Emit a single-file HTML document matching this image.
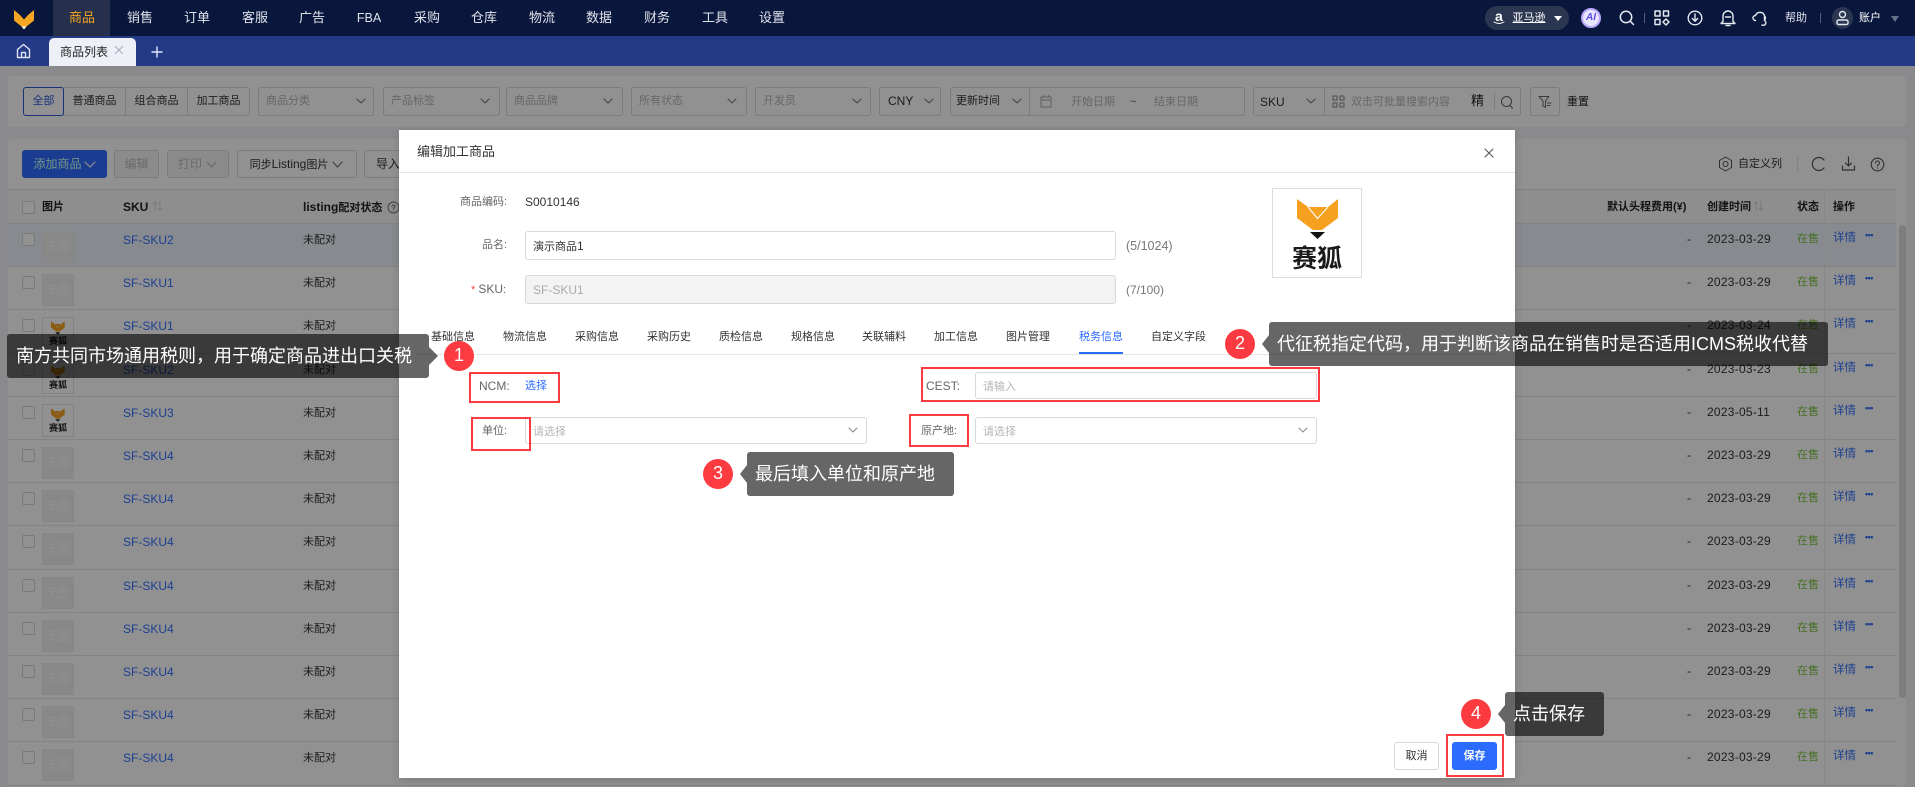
<!DOCTYPE html>
<html lang="zh"><head><meta charset="utf-8"><title>编辑加工商品</title>
<style>
*{box-sizing:border-box;margin:0;padding:0}
html,body{width:1915px;height:787px;overflow:hidden}
body{position:relative;background:#f2f3f8;font:11px/14px "Liberation Sans","Noto Sans CJK SC",sans-serif;color:#333}
.a,.a2{position:absolute;white-space:nowrap}
.l{font-size:12px}
#nav{position:absolute;left:0;top:0;width:1915px;height:36px;background:#0a173d}
#nav span{position:absolute;top:10px;font-size:13px;line-height:16px;color:#dfe3ea;transform:translateX(-50%);white-space:nowrap}
#act{position:absolute;left:53px;top:0;width:57px;height:36px;background:#262f4c}
#tabs{position:absolute;left:0;top:36px;width:1915px;height:30px;background:#253a87}
#tab{position:absolute;left:49px;top:2px;width:87px;height:28px;background:#eef0f8;border-radius:5px 5px 0 0}
.box{position:absolute;background:#fff;border:1px solid #d9d9d9;border-radius:3px}
.ph2{color:#b5b5b5}
.panel{position:absolute;background:#fff;border-radius:4px}
.btn{position:absolute;top:150px;height:28px;border:1px solid #d9d9d9;border-radius:3px;background:#fff;line-height:26px;text-align:center;font-size:12px;white-space:nowrap}
.r{position:absolute;left:8px;width:1888px;height:43.2px;border-bottom:1px solid #e6e6e6;background:#fff}
.r.sel{background:#edf3fc}
.r>*{position:absolute;white-space:nowrap}
.cb{left:14px;top:9px;width:13px;height:13px;border:1px solid #d5d5d5;border-radius:2px;background:#fff}
.ph{left:34px;top:7px;width:32px;height:32px;border:1px solid #eee;background:#efefef;color:#fbfbfb;text-align:center;line-height:30px;font-weight:400;font-size:12px}
.lg{left:34px;top:7px;width:32px;height:33px;border:1px solid #e4e4e4;background:#fff;overflow:hidden}
.lg svg{position:absolute;left:8px;top:3px;width:14px;height:14px}
.lg em{position:absolute;left:0;width:30px;top:18px;text-align:center;font:700 9px/11px "Liberation Sans","Noto Sans CJK SC",sans-serif;color:#222}
.sku{left:115px;top:9px;color:#3370ff;font-size:12px}
.st{left:295px;top:9px}
.da{left:1679px;top:8px;font-size:12px}
.dt{left:1699px;top:8px;font-size:12px;letter-spacing:.25px}
.on{left:1789px;top:8px;color:#79c53f}
.dl{left:1825px;top:7px;color:#3370ff;font-size:11.5px}
.mo{left:1857px;top:4px;color:#3370ff;font-weight:700;font-size:9px;letter-spacing:-.5px}
#ov{position:absolute;left:0;top:66px;width:1915px;height:721px;background:rgba(0,0,0,.43)}
#modal{position:absolute;left:399px;top:130px;width:1116px;height:648px;background:#fff;box-shadow:0 2px 8px rgba(0,0,0,.15)}
.lab{color:#666;position:absolute;white-space:nowrap;text-align:right}
.inp{position:absolute;border:1px solid #d9d9d9;border-radius:3px;background:#fff}
.tb{position:absolute;white-space:nowrap;color:#333}
.red{position:absolute;border:2.5px solid #fb3b3f}
.tip{position:absolute;height:44px;background:rgba(0,0,0,.6);border-radius:3px;color:#fff;font-size:18px;line-height:44px;white-space:nowrap}
.ar{position:absolute;width:0;height:0;border-top:9px solid transparent;border-bottom:9px solid transparent}
.num{position:absolute;width:30px;height:30px;border-radius:50%;background:#fb3b3f;color:#fff;font-size:18px;line-height:29px;text-align:center}
svg.i{position:absolute;fill:none;stroke-linecap:round;stroke-linejoin:round}
</style></head><body>
<svg width="0" height="0" style="position:absolute"><defs><symbol id="fox" viewBox="0 0 42 40"><path d="M0 0L11 8H31L41 0V19L25 31H16L0 19Z" fill="#f5a11f"/><path d="M11 8L20.5 19.5 31 8" fill="none" stroke="#fff" stroke-width="1.1"/><path d="M13 33H28L20.5 40Z" fill="#111"/></symbol></defs></svg>

<div id="nav"><div id="act"></div>
<svg style="position:absolute;left:13px;top:9px" width="22" height="21" viewBox="0 0 22 21"><path d="M1 1L7 6H15L21 1V11.5L13.5 17.5H8.5L1 11.5Z" fill="#f5a623"/><path d="M7 6L11 10.5 15 6Z" fill="#0a173d"/><path d="M8.5 17.5H13.5L11 20.5Z" fill="#fff"/></svg>
<span style="left:82px;color:#f5a623">商品</span><span style="left:140px">销售</span><span style="left:197px">订单</span><span style="left:255px">客服</span><span style="left:312px">广告</span><span style="left:369px;font-size:12.5px">FBA</span><span style="left:427px">采购</span><span style="left:484px">仓库</span><span style="left:542px">物流</span><span style="left:599px">数据</span><span style="left:657px">财务</span><span style="left:715px">工具</span><span style="left:772px">设置</span>
<div class="a" style="left:1485px;top:6px;width:84px;height:24px;border-radius:12px;background:#2b3650"></div>
<div class="a" style="left:1495px;top:8px;color:#fff;font:700 14px/16px 'Liberation Sans',sans-serif">a</div>
<svg class="i" style="left:1493px;top:21px" width="12" height="5" stroke="#fff" stroke-width="1"><path d="M1 1Q6 4 11 1"/></svg>
<span style="left:1529px;font-size:11px;color:#fff;text-decoration:underline">亚马逊</span>
<div class="a" style="left:1554px;top:16px;border-left:4px solid transparent;border-right:4px solid transparent;border-top:5px solid #fff"></div>
<div class="a" style="left:1581px;top:8px;width:20px;height:20px;border-radius:50%;background:#e9e6ff;border:2px solid #b9a7ff;color:#5a4be8;font:italic 700 10px/16px 'Liberation Sans',sans-serif;text-align:center">AI</div>
<svg class="i" style="left:1618px;top:9px" width="18" height="18" stroke="#e4e8ef" stroke-width="1.5"><circle cx="8" cy="8" r="5.7"/><path d="M12.2 12.2L15.5 15.5"/></svg>
<div class="a" style="left:1644px;top:13px;width:1px;height:10px;background:#56607a"></div>
<svg class="i" style="left:1654px;top:10px" width="16" height="16" stroke="#e4e8ef" stroke-width="1.5"><rect x="1" y="1" width="5" height="5"/><rect x="9.5" y="1" width="5" height="5"/><rect x="1" y="9.5" width="5" height="5"/><path d="M12 9L15 12 12 15 9 12Z"/></svg>
<svg class="i" style="left:1687px;top:10px" width="16" height="16" stroke="#e4e8ef" stroke-width="1.4"><circle cx="8" cy="8" r="6.8"/><path d="M8 4V11M5.3 8.5L8 11.2 10.7 8.5"/></svg>
<svg class="i" style="left:1720px;top:9px" width="16" height="18" stroke="#e4e8ef" stroke-width="1.4"><path d="M3 12.5V7A5 5 0 0 1 13 7V12.5L15 14.5H1ZM6 16.5H10M5.5 8H10.5"/></svg>
<svg class="i" style="left:1752px;top:9px" width="16" height="18" stroke="#e4e8ef" stroke-width="1.4"><path d="M3.5 11.5A2.5 2.5 0 0 1 3.5 6.5M3.5 6.5A4.8 4.8 0 0 1 12.5 6.5V11.5A2 2 0 0 1 10 16"/><path d="M12.5 7A2.5 2.5 0 0 1 12.5 11"/></svg>
<span style="left:1796px;font-size:11px">帮助</span>
<div class="a" style="left:1820px;top:13px;width:1px;height:10px;background:#56607a"></div>
<div class="a" style="left:1832px;top:7px;width:21px;height:22px;border-radius:50%;background:#2b3650"></div>
<svg class="i" style="left:1835px;top:10px" width="15" height="16" stroke="#e4e8ef" stroke-width="1.4"><circle cx="7.5" cy="4.5" r="3"/><rect x="2" y="10" width="11" height="4.5" rx="1.5"/></svg>
<span style="left:1870px;font-size:11px;color:#fff">账户</span>
<div class="a" style="left:1891px;top:16px;border-left:4.5px solid transparent;border-right:4.5px solid transparent;border-top:6px solid #667089"></div>
</div>

<div id="tabs">
<svg class="i" style="left:16px;top:7px" width="15" height="16" stroke="#dfe5f5" stroke-width="1.4"><path d="M1.5 14.5V6.5L7.5 1.5 13.5 6.5V14.5ZM5.5 14.5V9.5H9.5V14.5"/></svg>
<div id="tab"><div class="a" style="left:11px;top:7px;font-size:12px;color:#222">商品列表</div>
<svg class="i" style="left:65px;top:7px" width="10" height="10" stroke="#aab" stroke-width="1.1"><path d="M1.5 1.5L8.5 8.5M8.5 1.5L1.5 8.5"/></svg></div>
<svg class="i" style="left:151px;top:10px" width="12" height="12" stroke="#dfe5f5" stroke-width="1.4"><path d="M6 1V11M1 6H11"/></svg>
</div>

<div class="panel" style="left:8px;top:76px;width:1898px;height:51px"></div>
<div class="box" style="left:63px;top:87px;width:63px;height:29px;text-align:center;line-height:27px;border-radius:0">普通商品</div>
<div class="box" style="left:125px;top:87px;width:63px;height:29px;text-align:center;line-height:27px;border-radius:0">组合商品</div>
<div class="box" style="left:187px;top:87px;width:63px;height:29px;text-align:center;line-height:27px">加工商品</div>
<div class="box" style="left:23px;top:87px;width:41px;height:29px;border-color:#2a5bd7;color:#2a5bd7;text-align:center;line-height:27px;font-size:11px">全部</div>
<div class="box ph2" style="left:258px;top:87px;width:116px;height:29px;padding-left:7px;line-height:27px">商品分类</div>
<div class="box ph2" style="left:383px;top:87px;width:117px;height:29px;padding-left:7px;line-height:27px">产品标签</div>
<div class="box ph2" style="left:506px;top:87px;width:117px;height:29px;padding-left:7px;line-height:27px">商品品牌</div>
<div class="box ph2" style="left:631px;top:87px;width:116px;height:29px;padding-left:7px;line-height:27px">所有状态</div>
<div class="box ph2" style="left:755px;top:87px;width:116px;height:29px;padding-left:7px;line-height:27px">开发员</div>
<div class="box" style="left:879px;top:87px;width:62px;height:29px;padding-left:8px;line-height:27px;font-size:12px">CNY</div>
<svg class="i" style="left:356px;top:98px" width="580" height="8" stroke="#777" stroke-width="1"><path d="M1 1L5 5 9 1M125 1L129 5 133 1M248 1L252 5 256 1M372 1L376 5 380 1M497 1L501 5 505 1M569 1L573 5 577 1"/></svg>
<div class="box" style="left:950px;top:87px;width:295px;height:29px"></div>
<div class="a" style="left:956px;top:94px">更新时间</div>
<div class="a" style="left:1029px;top:88px;width:1px;height:27px;background:#d9d9d9"></div>
<svg class="i" style="left:1012px;top:98px" width="10" height="8" stroke="#777"><path d="M1 1L5 5 9 1"/></svg>
<svg class="i" style="left:1040px;top:95px" width="12" height="13" stroke="#aaa"><rect x="1" y="2" width="10" height="10"/><path d="M1 5H11M3.5 .5V2M8.5 .5V2"/></svg>
<div class="a ph2" style="left:1071px;top:95px">开始日期</div><div class="a" style="left:1130px;top:95px;color:#666">~</div><div class="a ph2" style="left:1154px;top:95px">结束日期</div>
<div class="box" style="left:1253px;top:87px;width:268px;height:29px"></div>
<div class="a l" style="left:1260px;top:95px">SKU</div>
<svg class="i" style="left:1306px;top:98px" width="10" height="8" stroke="#777"><path d="M1 1L5 5 9 1"/></svg>
<div class="a" style="left:1324px;top:88px;width:1px;height:27px;background:#d9d9d9"></div>
<svg class="i" style="left:1332px;top:95px" width="13" height="13" stroke="#888"><rect x="1" y="1" width="4" height="4"/><rect x="8" y="1" width="4" height="4"/><rect x="1" y="8" width="4" height="4"/><rect x="8" y="8" width="4" height="4"/></svg>
<div class="a ph2" style="left:1351px;top:95px">双击可批量搜索内容</div>
<div class="a" style="left:1471px;top:94px;font-size:13px;color:#222">精</div>
<div class="a" style="left:1494px;top:93px;width:1px;height:17px;background:#d9d9d9"></div>
<svg class="i" style="left:1500px;top:95px" width="14" height="15" stroke="#666"><circle cx="6.5" cy="6.5" r="5"/><path d="M10 10.5L12.5 13.5"/></svg>
<div class="box" style="left:1530px;top:87px;width:30px;height:29px"></div>
<svg class="i" style="left:1538px;top:95px" width="14" height="14" stroke="#666"><path d="M1 1.5H11L7.5 6V12.5L5 11V6ZM9.5 8H13M9.5 10.5H12"/></svg>
<div class="a" style="left:1567px;top:95px;color:#222">重置</div>

<div class="panel" style="left:8px;top:139px;width:1898px;height:648px"></div>
<div class="btn" style="left:22px;width:85px;background:#2f6bff;border-color:#2f6bff;color:#cfe;padding-right:14px">添加商品</div>
<svg class="i" style="left:84px;top:161px" width="12" height="8" stroke="#dde6ff" stroke-width="1.3"><path d="M1 1L6 6 11 1"/></svg>
<div class="btn" style="left:114px;width:45px;background:#f5f5f5;color:#bbb">编辑</div>
<div class="btn" style="left:167px;width:62px;background:#f5f5f5;color:#bbb;padding-right:16px">打印</div>
<svg class="i" style="left:206px;top:161px" width="11" height="8" stroke="#bbb" stroke-width="1.2"><path d="M1 1L5.5 6 10 1"/></svg>
<div class="btn" style="left:237px;width:120px;padding-right:16px;font-size:11px">同步<span class="l">Listing</span>图片</div>
<svg class="i" style="left:332px;top:161px" width="11" height="8" stroke="#777" stroke-width="1.2"><path d="M1 1L5.5 6 10 1"/></svg>
<div class="btn" style="left:364px;width:60px;text-align:left;padding-left:11px">导入</div>
<svg class="i" style="left:1718px;top:156px" width="15" height="16" stroke="#555"><path d="M7.5 1L13.5 4.5V11.5L7.5 15 1.5 11.5V4.5Z"/><circle cx="7.5" cy="8" r="2.5"/></svg>
<div class="a" style="left:1738px;top:157px;color:#333;font-size:11px">自定义列</div>
<div class="a" style="left:1797px;top:156px;width:1px;height:16px;background:#e3e3e3"></div>
<svg class="i" style="left:1811px;top:156px" width="15" height="16" stroke="#555" stroke-width="1.2"><path d="M13 4A6.5 6.5 0 1 0 13 12"/></svg>
<svg class="i" style="left:1841px;top:156px" width="15" height="16" stroke="#555" stroke-width="1.2"><path d="M7.5 1V10M4.5 7L7.5 10 10.5 7M1.5 10V14H13.5V10"/></svg>
<svg class="i" style="left:1870px;top:157px" width="15" height="15" stroke="#555" stroke-width="1.1"><circle cx="7.5" cy="7.5" r="6.3"/><path d="M5.5 6A2 2 0 1 1 7.5 8V9M7.5 11V11.2"/></svg>

<div class="a" style="left:8px;top:189px;width:1888px;height:35px;background:#fafafa;border-top:1px solid #e3e3e3;border-bottom:1px solid #e6e6e6"></div>
<div class="a" style="left:22px;top:201px;width:13px;height:13px;border:1px solid #d5d5d5;background:#fff;border-radius:2px"></div>
<b class="a" style="left:42px;top:200px;color:#222">图片</b>
<b class="a l" style="left:123px;top:200px;color:#222">SKU</b><span class="a" style="left:152px;top:200px;color:#ccc">⇅</span>
<b class="a" style="left:303px;top:200px;color:#222"><span class="l">listing</span>配对状态</b>
<svg class="i" style="left:387px;top:201px" width="13" height="13" stroke="#777"><circle cx="6.5" cy="6.5" r="5.5"/><path d="M5 5.2A1.5 1.5 0 1 1 6.5 7V8M6.5 9.8V10"/></svg>
<b class="a" style="left:1607px;top:200px;color:#222">默认头程费用(¥)</b>
<b class="a" style="left:1707px;top:200px;color:#222">创建时间</b><span class="a" style="left:1753px;top:200px;color:#ccc">⇅</span>
<b class="a" style="left:1797px;top:200px;color:#222">状态</b>
<b class="a" style="left:1833px;top:200px;color:#222">操作</b>

<div class="r sel" style="top:224px"><i class="cb"></i><b class="ph">无图</b><a class="sku">SF-SKU2</a><span class="st">未配对</span><span class="da">-</span><span class="dt">2023-03-29</span><span class="on">在售</span><a class="dl">详情</a><span class="mo">•••</span></div>
<div class="r" style="top:267.2px"><i class="cb"></i><b class="ph">无图</b><a class="sku">SF-SKU1</a><span class="st">未配对</span><span class="da">-</span><span class="dt">2023-03-29</span><span class="on">在售</span><a class="dl">详情</a><span class="mo">•••</span></div>
<div class="r" style="top:310.4px"><i class="cb"></i><div class="lg"><svg><use href="#fox"/></svg><em>赛狐</em></div><a class="sku">SF-SKU1</a><span class="st">未配对</span><span class="da">-</span><span class="dt">2023-03-24</span><span class="on">在售</span><a class="dl">详情</a><span class="mo">•••</span></div>
<div class="r" style="top:353.6px"><i class="cb"></i><div class="lg"><svg><use href="#fox"/></svg><em>赛狐</em></div><a class="sku">SF-SKU2</a><span class="st">未配对</span><span class="da">-</span><span class="dt">2023-03-23</span><span class="on">在售</span><a class="dl">详情</a><span class="mo">•••</span></div>
<div class="r" style="top:396.8px"><i class="cb"></i><div class="lg"><svg><use href="#fox"/></svg><em>赛狐</em></div><a class="sku">SF-SKU3</a><span class="st">未配对</span><span class="da">-</span><span class="dt">2023-05-11</span><span class="on">在售</span><a class="dl">详情</a><span class="mo">•••</span></div>
<div class="r" style="top:440px"><i class="cb"></i><b class="ph">无图</b><a class="sku">SF-SKU4</a><span class="st">未配对</span><span class="da">-</span><span class="dt">2023-03-29</span><span class="on">在售</span><a class="dl">详情</a><span class="mo">•••</span></div>
<div class="r" style="top:483.2px"><i class="cb"></i><b class="ph">无图</b><a class="sku">SF-SKU4</a><span class="st">未配对</span><span class="da">-</span><span class="dt">2023-03-29</span><span class="on">在售</span><a class="dl">详情</a><span class="mo">•••</span></div>
<div class="r" style="top:526.4px"><i class="cb"></i><b class="ph">无图</b><a class="sku">SF-SKU4</a><span class="st">未配对</span><span class="da">-</span><span class="dt">2023-03-29</span><span class="on">在售</span><a class="dl">详情</a><span class="mo">•••</span></div>
<div class="r" style="top:569.6px"><i class="cb"></i><b class="ph">无图</b><a class="sku">SF-SKU4</a><span class="st">未配对</span><span class="da">-</span><span class="dt">2023-03-29</span><span class="on">在售</span><a class="dl">详情</a><span class="mo">•••</span></div>
<div class="r" style="top:612.8px"><i class="cb"></i><b class="ph">无图</b><a class="sku">SF-SKU4</a><span class="st">未配对</span><span class="da">-</span><span class="dt">2023-03-29</span><span class="on">在售</span><a class="dl">详情</a><span class="mo">•••</span></div>
<div class="r" style="top:656px"><i class="cb"></i><b class="ph">无图</b><a class="sku">SF-SKU4</a><span class="st">未配对</span><span class="da">-</span><span class="dt">2023-03-29</span><span class="on">在售</span><a class="dl">详情</a><span class="mo">•••</span></div>
<div class="r" style="top:699.2px"><i class="cb"></i><b class="ph">无图</b><a class="sku">SF-SKU4</a><span class="st">未配对</span><span class="da">-</span><span class="dt">2023-03-29</span><span class="on">在售</span><a class="dl">详情</a><span class="mo">•••</span></div>
<div class="r" style="top:742.4px"><i class="cb"></i><b class="ph">无图</b><a class="sku">SF-SKU4</a><span class="st">未配对</span><span class="da">-</span><span class="dt">2023-03-29</span><span class="on">在售</span><a class="dl">详情</a><span class="mo">•••</span></div>
<div class="a" style="left:1824px;top:189px;width:1px;height:598px;background:#eee"></div>
<div class="a" style="left:1899px;top:225px;width:7px;height:473px;background:#dcdcdc;border-radius:4px"></div>

<div id="ov"></div>

<div id="modal">
<div class="a" style="left:18px;top:14px;font-size:13px;line-height:16px;color:#333">编辑加工商品</div>
<svg class="i" style="left:1085px;top:18px" width="10" height="10" stroke="#555" stroke-width="1.1"><path d="M1 1L9 9M9 1L1 9"/></svg>
<div class="a" style="left:0;top:42px;width:1116px;height:1px;background:#e5e5e5"></div>
<div class="lab" style="left:61px;top:65px">商品编码:</div>
<div class="a l" style="left:126px;top:65px;color:#333">S0010146</div>
<div class="lab" style="left:83px;top:108px">品名:</div>
<div class="inp" style="left:126px;top:101px;width:591px;height:29px"></div>
<div class="a" style="left:134px;top:109px;color:#333">演示商品<span class="l">1</span></div>
<div class="a" style="left:727px;top:109px;color:#777;font-size:12.5px">(5/1024)</div>
<div class="lab" style="left:72px;top:152px"><span style="color:#f44">*</span> <span class="l">SKU</span>:</div>
<div class="inp" style="left:126px;top:145px;width:591px;height:29px;background:#f3f3f3"></div>
<div class="a l" style="left:134px;top:153px;color:#aaa">SF-SKU1</div>
<div class="a" style="left:727px;top:153px;color:#777;font-size:12px">(7/100)</div>
<div class="a" style="left:873px;top:58px;width:90px;height:90px;border:1px solid #ddd;background:#fff"></div>
<svg style="position:absolute;left:898px;top:69px" width="42" height="40"><use href="#fox"/></svg>
<div class="a" style="left:892px;top:113px;width:52px;text-align:center;font:700 25px/28px 'Noto Sans CJK SC',sans-serif;color:#1a1a1a">赛狐</div>

<div class="tb" style="left:32px;top:200px">基础信息</div><div class="tb" style="left:104px;top:200px">物流信息</div><div class="tb" style="left:176px;top:200px">采购信息</div><div class="tb" style="left:248px;top:200px">采购历史</div><div class="tb" style="left:320px;top:200px">质检信息</div><div class="tb" style="left:392px;top:200px">规格信息</div><div class="tb" style="left:463px;top:200px">关联辅料</div><div class="tb" style="left:535px;top:200px">加工信息</div><div class="tb" style="left:607px;top:200px">图片管理</div><div class="tb" style="left:680px;top:200px;color:#2b6cff">税务信息</div><div class="tb" style="left:752px;top:200px">自定义字段</div>
<div class="a" style="left:18px;top:224px;width:1080px;height:1px;background:#e5e5e5"></div>
<div class="a" style="left:680px;top:222px;width:44px;height:2px;background:#2b6cff"></div>

<div class="lab l" style="left:80px;top:249px">NCM:</div>
<div class="a" style="left:126px;top:249px;color:#2b6cff">选择</div>
<div class="lab l" style="left:527px;top:249px">CEST:</div>
<div class="inp" style="left:576px;top:242px;width:342px;height:27px"></div>
<div class="a ph2" style="left:584px;top:250px">请输入</div>
<div class="lab" style="left:83px;top:294px">单位:</div>
<div class="inp" style="left:126px;top:287px;width:342px;height:27px"></div>
<div class="a ph2" style="left:134px;top:295px">请选择</div>
<svg class="i" style="left:449px;top:297px" width="10" height="8" stroke="#888"><path d="M1 1L5 5 9 1"/></svg>
<div class="lab" style="left:522px;top:294px">原产地:</div>
<div class="inp" style="left:576px;top:287px;width:342px;height:27px"></div>
<div class="a ph2" style="left:584px;top:295px">请选择</div>
<svg class="i" style="left:899px;top:297px" width="10" height="8" stroke="#888"><path d="M1 1L5 5 9 1"/></svg>

<div class="a" style="left:995px;top:612px;width:45px;height:28px;border:1px solid #d9d9d9;border-radius:3px;text-align:center;line-height:26px;color:#333">取消</div>
<div class="a" style="left:1053px;top:612px;width:45px;height:28px;background:#2b6cff;border-radius:3px;text-align:center;line-height:28px;color:#fff;font-weight:700">保存</div>
</div>

<div class="red" style="left:469px;top:372px;width:91px;height:31px"></div>
<div class="red" style="left:921px;top:367px;width:399px;height:35px"></div>
<div class="red" style="left:471px;top:417px;width:60px;height:34px"></div>
<div class="red" style="left:909px;top:414px;width:60px;height:33px"></div>
<div class="red" style="left:1446px;top:734px;width:58px;height:43px"></div>

<div class="tip" style="left:7px;top:334px;width:422px;padding-left:9px">南方共同市场通用税则，用于确定商品进出口关税</div>
<div class="ar" style="left:429px;top:347px;border-left:9px solid rgba(0,0,0,.6)"></div>
<div class="num" style="left:444px;top:341px">1</div>

<div class="tip" style="left:1269px;top:322px;width:559px;padding-left:8px">代征税指定代码，用于判断该商品在销售时是否适用ICMS税收代替</div>
<div class="ar" style="left:1262px;top:335px;border-right:7px solid rgba(0,0,0,.6)"></div>
<div class="num" style="left:1225px;top:329px">2</div>

<div class="tip" style="left:747px;top:452px;width:207px;padding-left:8px">最后填入单位和原产地</div>
<div class="ar" style="left:740px;top:465px;border-right:7px solid rgba(0,0,0,.6)"></div>
<div class="num" style="left:703px;top:459px">3</div>

<div class="tip" style="left:1505px;top:692px;width:99px;padding-left:8px">点击保存</div>
<div class="ar" style="left:1498px;top:705px;border-right:7px solid rgba(0,0,0,.6)"></div>
<div class="num" style="left:1461px;top:699px">4</div>
</body></html>
